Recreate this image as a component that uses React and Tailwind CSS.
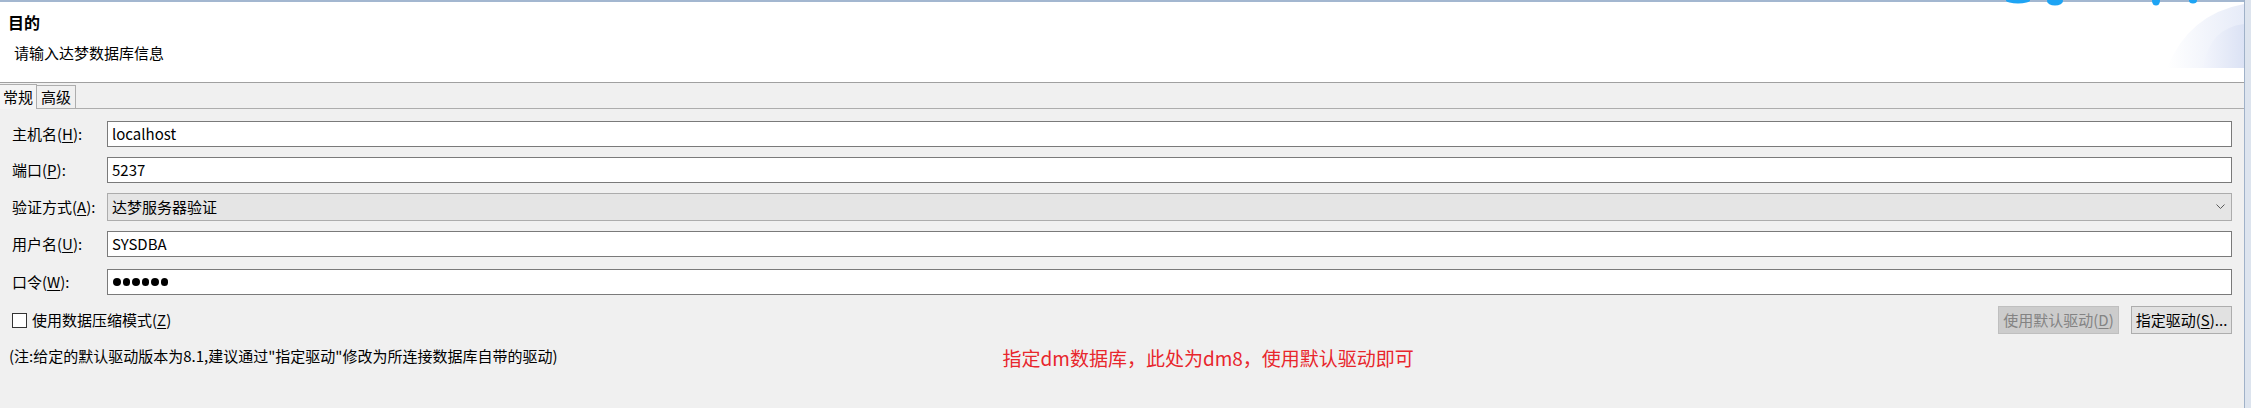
import React from "react";

const Key = ({ children }) => (
  <u className="underline underline-offset-[2px] decoration-1">{children}</u>
);

const Field = ({ label, k, rest = "):", children, className = "" }) => (
  <div className={`flex items-center ${className}`}>
    <div className="w-[95px] shrink-0 text-[15px] leading-[20px] text-black whitespace-nowrap">
      {label}(<Key>{k}</Key>{rest}
    </div>
    {children}
  </div>
);

const TextBox = ({ children, h = "h-[26px]" }) => (
  <div
    className={`flex-1 ${h} bg-white border border-[#7a7a7a] flex items-center pl-[4px] text-[15px] leading-[20px] text-black`}
  >
    {children}
  </div>
);

export default function App() {
  return (
    <div className="relative w-[2251px] h-[408px] flex bg-[#f0f0f0] overflow-hidden font-['Noto_Sans_CJK_SC',sans-serif] text-black">
      {/* main window */}
      <div className="flex-1 flex flex-col">
        <div className="h-[2px] bg-[#a3b7d0]" />

        {/* header */}
        <div className="relative h-[81px] bg-white border-b border-[#a0a0a0] pt-[10px]">
          <div className="pl-[8px] text-[16px] leading-[20px] font-bold">目的</div>
          <div className="pl-[14px] mt-[11px] text-[15px] leading-[20px]">
            请输入达梦数据库信息
          </div>
          <svg
            className="absolute top-0 right-0"
            width="77"
            height="66"
            viewBox="0 0 77 66"
          >
            <defs>
              <linearGradient id="hg" x1="0" y1="0" x2="1" y2="0">
                <stop offset="0" stopColor="#ffffff" />
                <stop offset="1" stopColor="#e6ebf8" />
              </linearGradient>
              <linearGradient id="hg2" x1="0" y1="0" x2="1" y2="0">
                <stop offset="0" stopColor="#f3f5fc" />
                <stop offset="1" stopColor="#dbe2f4" />
              </linearGradient>
            </defs>
            <path d="M0 66 Q22 12 77 2 L77 66 Z" fill="url(#hg)" />
            <path d="M36 66 Q42 26 77 22 L77 66 Z" fill="url(#hg2)" />
          </svg>
        </div>

        {/* tabs */}
        <div className="h-[26px] flex items-end">
          <div className="w-[37px] h-[25px] border-t border-r border-[#adadad] bg-[#f4f4f4] flex items-center justify-center text-[15px] leading-[20px]">
            常规
          </div>
          <div className="w-[39px] h-[24px] border-t border-r border-b border-[#adadad] flex items-center justify-center text-[15px] leading-[20px]">
            高级
          </div>
          <div className="flex-1 h-[1px] bg-[#adadad]" />
        </div>

        {/* panel */}
        <div className="flex-1 px-[12px] pt-[12px]">
          <Field label="主机名" k="H" className="mb-[10px]">
            <TextBox>localhost</TextBox>
          </Field>
          <Field label="端口" k="P" className="mb-[10px]">
            <TextBox>5237</TextBox>
          </Field>
          <Field label="验证方式" k="A" className="mb-[10px]">
            <div className="flex-1 h-[28px] bg-[#e5e5e5] border border-[#acacac] flex items-center pl-[4px] pr-[6px] text-[15px] leading-[20px]">
              <span className="flex-1">达梦服务器验证</span>
              <svg width="9" height="6" viewBox="0 0 9 6">
                <polyline
                  points="0.5,0.5 4.5,4.5 8.5,0.5"
                  fill="none"
                  stroke="#5a5a5a"
                  strokeWidth="1"
                />
              </svg>
            </div>
          </Field>
          <Field label="用户名" k="U" className="mb-[12px]">
            <TextBox>SYSDBA</TextBox>
          </Field>
          <Field label="口令" k="W">
            <TextBox>
              <div className="flex gap-[2px] pl-[1px]">
                {[0, 1, 2, 3, 4, 5].map((i) => (
                  <span key={i} className="w-[7.5px] h-[7.5px] rounded-full bg-black" />
                ))}
              </div>
            </TextBox>
          </Field>

          {/* checkbox + buttons */}
          <div className="mt-[11px] h-[28px] flex items-center">
            <div className="w-[15px] h-[15px] border border-[#333333] bg-white" />
            <span className="ml-[5px] text-[15px] leading-[20px]">
              使用数据压缩模式(<Key>Z</Key>)
            </span>
            <div className="flex-1" />
            <div className="w-[121px] h-[28px] bg-[#cccccc] border border-[#bfbfbf] flex items-center justify-center text-[15px] leading-[20px] text-[#838383]">
              使用默认驱动(<Key>D</Key>)
            </div>
            <div className="ml-[12px] w-[101px] h-[28px] bg-[#e1e1e1] border border-[#adadad] flex items-center justify-center text-[15px] leading-[20px]">
              指定驱动(<Key>S</Key>)...
            </div>
          </div>

          {/* note */}
          <div className="mt-[12px] flex items-start">
            <span className="ml-[-3px] text-[15px] leading-[20px] whitespace-nowrap">
              (注:给定的默认驱动版本为8.1,建议通过"指定驱动"修改为所连接数据库自带的驱动)
            </span>
            <span className="ml-[445px] mt-[0px] text-[19px] leading-[24px] text-[#e8262c] whitespace-nowrap">
              指定dm数据库，此处为dm8，使用默认驱动即可
            </span>
          </div>
        </div>
      </div>

      {/* right window edge */}
      <div className="w-[7px] border-l border-[#9fb1c8] bg-[#dde4ee]" />

      {/* bits of the banner image poking in at the top */}
      <svg
        className="absolute top-0 left-[2000px]"
        width="210"
        height="8"
        viewBox="0 0 210 8"
      >
        <ellipse cx="18" cy="0.5" rx="12" ry="3" fill="#1ea4f4" />
        <ellipse cx="55" cy="1" rx="8" ry="4.5" fill="#1ea4f4" />
        <ellipse cx="156" cy="1" rx="4" ry="4.5" fill="#1ea4f4" />
        <ellipse cx="193" cy="0.5" rx="4" ry="3" fill="#1ea4f4" />
      </svg>
    </div>
  );
}
